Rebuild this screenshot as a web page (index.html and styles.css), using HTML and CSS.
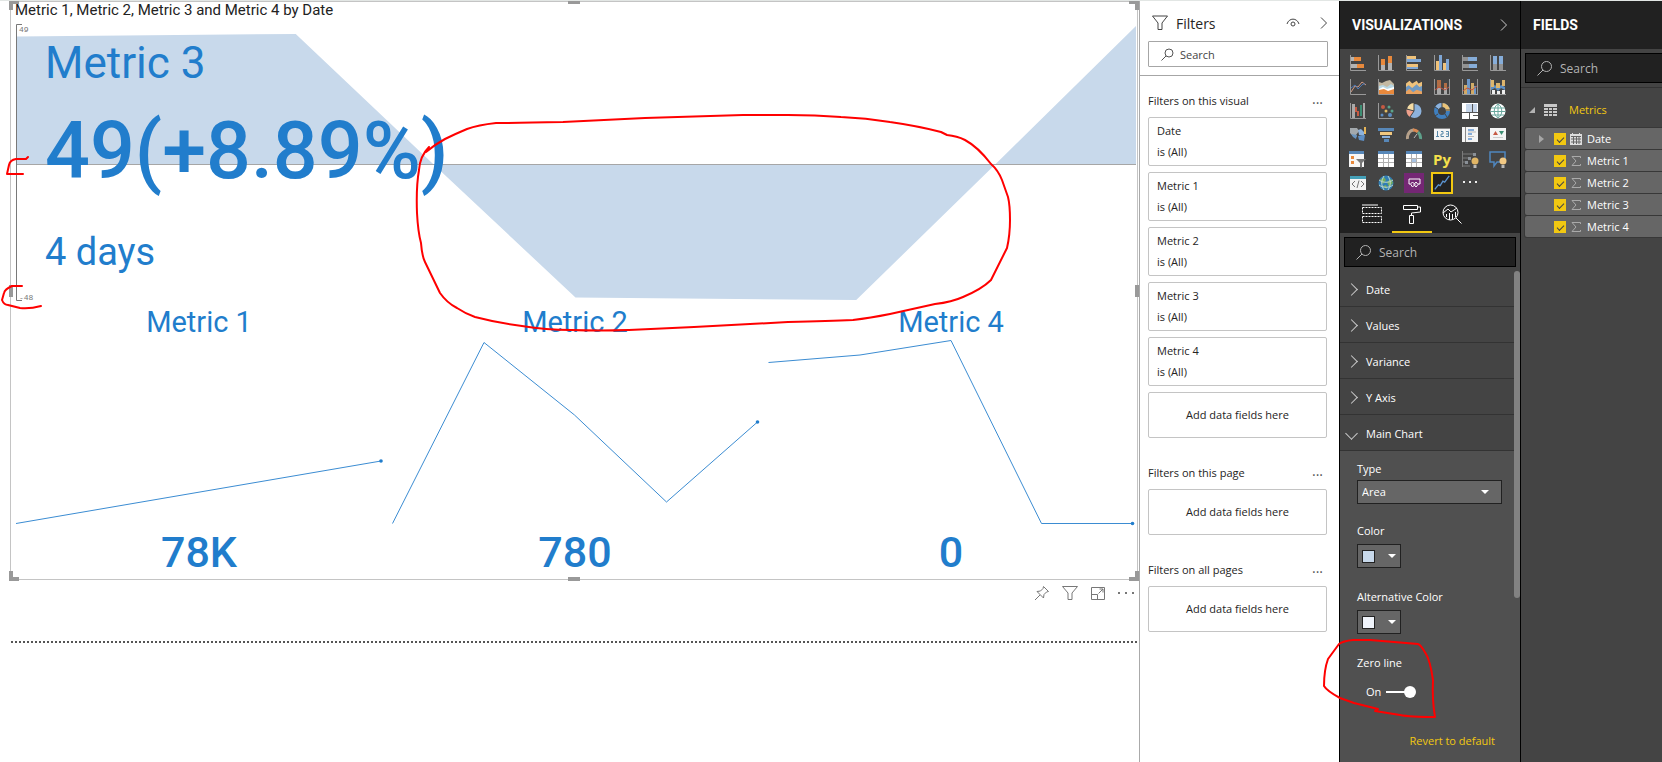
FILE: index.html
```html
<!DOCTYPE html>
<html lang="en">
<head>
<meta charset="utf-8">
<title>Metrics report</title>
<link rel="stylesheet" href="styles.css">
</head>
<body>
<div class="app">
  <main class="canvas">
    <section class="visual">
      <i class="handle tl"></i><i class="handle tr"></i><i class="handle bl"></i><i class="handle br"></i>
      <i class="handle top"></i><i class="handle bottom"></i><i class="handle left"></i><i class="handle right"></i>
      <h1 class="visual-title">Metric 1, Metric 2, Metric 3 and Metric 4 by Date</h1>
      <div class="main-chart">
        <svg class="area" viewBox="0 0 1121 280" preserveAspectRatio="none">
          <path d="M1 14.5 280 12 418 142.500H1ZM418 142.500H980L841 278 560 275.500ZM980 142.500 1121 4V142.500Z" fill="#c8d9eb"/>
          <path d="M0 142.500H1121" stroke="#a6a6a6"/>
          <path d="M6 2.500H.5V278.500H6" fill="none" stroke="#777"/>
        </svg>
        <div class="axis"><span>49</span><span>-48</span></div>
        <div class="kpi">
          <div class="kpi-name">Metric 3</div>
          <div class="kpi-value">49(+8.89%)</div>
          <div class="kpi-period">4 days</div>
        </div>
      </div>
      <div class="sparks">
        <div class="spark">
          <div class="spark-name">Metric 1</div>
          <svg viewBox="0 0 366 191" preserveAspectRatio="none"><path d="M0 187.500 365 125"/><circle cx="365" cy="125" r="1.800"/></svg>
          <div class="spark-value">78K</div>
        </div>
        <div class="spark">
          <div class="spark-name">Metric 2</div>
          <svg viewBox="0 0 366 191" preserveAspectRatio="none"><path d="M.5 187.500 92 6.500 182.500 79 274.500 166 365.500 86"/><circle cx="365.500" cy="86" r="1.800"/></svg>
          <div class="spark-value">780</div>
        </div>
        <div class="spark">
          <div class="spark-name">Metric 4</div>
          <svg viewBox="0 0 366 191" preserveAspectRatio="none"><path d="M.5 26.500 92 19 183 4.500 273.500 187.500H364.500"/><circle cx="364.500" cy="187.500" r="1.800"/></svg>
          <div class="spark-value">0</div>
        </div>
      </div>
    </section>
    <div class="visual-tools">
      <button aria-label="Pin visual"><svg viewBox="0 0 16 16"><path d="M9.500 1.500 14.500 6.500 12.500 7 10 9.500 9.500 13 3 6.500 6.500 6 9 3.500ZM6 10 1 15"/></svg></button>
      <button aria-label="Filters"><svg viewBox="0 0 16 16"><path d="M.5 1.500H15.500L10 8V14.500H6V8Z"/></svg></button>
      <button aria-label="Focus mode"><svg viewBox="0 0 16 16"><path d="M1.500 2.500H14.500V14.500H1.500ZM1.500 9.500H7.500V14.500M8.500 8.500 13 4M9.500 4H13V7.500"/></svg></button>
      <button aria-label="More options"><svg viewBox="0 0 16 16"><path class="dots" d="M0 7h2v2H0zM7 7h2v2H7zM14 7h2v2h-2z"/></svg></button>
    </div>
    <div class="page-end"></div>
  </main>

  <aside class="filters">
    <header class="filters-head">
      <div class="filters-title">
        <svg class="funnel" viewBox="0 0 16 16"><path d="M.5 1H15.500L10 8V14.500H6V8Z"/></svg>
        <h2>Filters</h2>
        <button aria-label="Show or hide filters"><svg width="14" height="12" viewBox="0 0 14 12"><path d="M1 7C3 .5 11 .5 13 7" /><circle cx="7" cy="7" r="2"/></svg></button>
        <button aria-label="Collapse filters"><svg width="8" height="12" viewBox="0 0 8 12"><path d="M1 .5 6.500 6 1 11.500"/></svg></button>
      </div>
      <label class="filter-search">
        <svg width="13" height="13" viewBox="0 0 13 13"><circle cx="8" cy="5" r="4"/><path d="M5 8 .5 12.500"/></svg>
        <input type="text" placeholder="Search" aria-label="Search filters">
      </label>
    </header>
    <div class="filters-body">
      <section>
        <div class="section-head"><h3>Filters on this visual</h3><button aria-label="More">...</button></div>
        <div class="cards">
          <div class="card"><b>Date</b><span>is (All)</span></div>
          <div class="card"><b>Metric 1</b><span>is (All)</span></div>
          <div class="card"><b>Metric 2</b><span>is (All)</span></div>
          <div class="card"><b>Metric 3</b><span>is (All)</span></div>
          <div class="card"><b>Metric 4</b><span>is (All)</span></div>
          <div class="drop">Add data fields here</div>
        </div>
      </section>
      <section>
        <div class="section-head"><h3>Filters on this page</h3><button aria-label="More">...</button></div>
        <div class="drop">Add data fields here</div>
      </section>
      <section>
        <div class="section-head"><h3>Filters on all pages</h3><button aria-label="More">...</button></div>
        <div class="drop">Add data fields here</div>
      </section>
    </div>
  </aside>

  <aside class="viz">
    <header class="dark-head"><h2>VISUALIZATIONS</h2><button aria-label="Collapse"><svg width="8" height="12" viewBox="0 0 8 12"><path d="M1 .5 6.500 6 1 11.500"/></svg></button></header>
    <div class="gallery">
      <button aria-label="Stacked bar"><svg viewBox="0 0 16 16"><path d="M1 2h3v4H1zM1 9h6v4H1z" fill="#b3b3b3"/><path d="M4 2h7v4H4zM7 9h7v4H7z" fill="#e8893c"/><path class="ax" d="M.5 0V15.500H16"/></svg></button>
      <button aria-label="Stacked column"><svg viewBox="0 0 16 16"><path d="M3 10h4v5H3zM10 8h4v7h-4z" fill="#b3b3b3"/><path d="M3 4h4v6H3zM10 1h4v7h-4z" fill="#e8893c"/><path class="ax" d="M.5 0V15.500H16"/></svg></button>
      <button aria-label="Clustered bar"><svg viewBox="0 0 16 16"><path d="M1 1h9v3H1zM1 9h11v3H1z" fill="#efc27b"/><path d="M1 4h14v3H1zM1 12h11v2H1z" fill="#7fa7d6"/><path class="ax" d="M.5 0V15.500H16"/></svg></button>
      <button aria-label="Clustered column"><svg viewBox="0 0 16 16"><path d="M2 6h3v9H2zM9 8h3v7H9z" fill="#efc27b"/><path d="M5 0h3v15H5zM12 4h3v11h-3z" fill="#7fa7d6"/><path class="ax" d="M.5 0V15.500H16"/></svg></button>
      <button aria-label="100% stacked bar"><svg viewBox="0 0 16 16"><path d="M1 2h5v4H1zM1 9h6v4H1z" fill="#929292"/><path d="M6 2h9v4H6zM7 9h8v4H7z" fill="#86add9"/><path class="ax" d="M.5 0V15.500H16"/></svg></button>
      <button aria-label="100% stacked column"><svg viewBox="0 0 16 16"><path d="M3 9h4v6H3zM9 9h4v6H9z" fill="#929292"/><path d="M3 1h4v8H3zM9 1h4v8H9z" fill="#86add9"/><path class="ax" d="M.5 0V15.500H16"/></svg></button>

      <button aria-label="Line"><svg viewBox="0 0 16 16" fill="none"><path d="M1 13 5 7 8 8 12 3 16 6" stroke="#d19a83"/><path d="M1 9 5 6 8 10 13 5 15 5" stroke="#4b78b5"/><path class="ax" d="M.5 0V15.500H16"/></svg></button>
      <button aria-label="Area"><svg viewBox="0 0 16 16"><path d="M1 3 4 4 8 2 12 1 16 5V15H1Z" fill="#c4b9a2"/><path d="M1 7 5 6 9 8 13 5 16 7V15H1Z" fill="#b8d7e3"/><path d="M1 10 5 8 9 10 16 8V15H1Z" fill="#fff"/><path d="M1 11 6 10 10 12 16 10V15H1Z" fill="#e8893c"/><path class="ax" d="M.5 0V15.500H16"/></svg></button>
      <button aria-label="Stacked area"><svg viewBox="0 0 18 16"><path d="M0 4 4 1 7 4 12 1 14 4 18 2V16H0Z" fill="#efc27b"/><path d="M0 8 3 6 7 9 12 5 15 8 18 7V16H0Z" fill="#6f9ac4"/><path d="M0 13 4 10 8 14 12 11 18 13V16H0Z" fill="#e8a25f"/></svg></button>
      <button aria-label="Line and stacked column"><svg viewBox="0 0 16 16" fill="none"><path d="M3 1h4v8H3zM10 4h3v5h-3z" fill="#b26d44"/><path d="M3 9h4v6H3zM10 9h3v6h-3z" fill="#a9a9a9"/><path d="M1 11 5 8 11 11 15 8" stroke="#c2533f"/><path class="ax" d="M.5 0V15.500H16M15.500 0V15"/></svg></button>
      <button aria-label="Line and clustered column"><svg viewBox="0 0 16 16" fill="none"><path d="M2 6h3v9H2zM9 4h3v11H9z" fill="#d2ab67"/><path d="M5 0h3v15H5zM12 7h2v8h-2z" fill="#6d98c9"/><path d="M1 12 5 9 10 11 15 7" stroke="#c2533f"/><path class="ax" d="M.5 0V15.500H16M15.500 0V15"/></svg></button>
      <button aria-label="Ribbon"><svg viewBox="0 0 16 16"><path d="M1 8 5 6 8 9 11 6 15 8V11L11 9 8 12 5 9 1 11Z" fill="#5e8fc4"/><path d="M1 1h3v7H1zM6 4h4v5H6zM12 1h3v6h-3z" fill="#ddb56d"/><path d="M2 11h3v4H2zM7 12h3v3H7zM12 11h3v4h-3z" fill="#eee"/><path class="ax" d="M.5 0V15.500H16"/></svg></button>

      <button aria-label="Waterfall"><svg viewBox="0 0 16 16"><path d="M2 1h3v14H2zM13 0h2v15h-2z" fill="#a9a9a9"/><path d="M5 4h2v5H5zM7 8h2v5H7z" fill="#c65a43"/><path d="M10 2h2v11h-2z" fill="#3e8f74"/><path class="ax" d="M.5 0V15.500H16"/></svg></button>
      <button aria-label="Scatter"><svg viewBox="0 0 16 16"><circle cx="5" cy="4" r="2" fill="#c65a43"/><circle cx="11" cy="4" r="1.500" fill="#5aa38b"/><circle cx="8" cy="8" r="1.500" fill="#e4bc64"/><circle cx="14" cy="8" r="1.500" fill="#5aa38b"/><circle cx="4" cy="12" r="1.500" fill="#5d8ec4"/><circle cx="12" cy="12" r="2" fill="#5d8ec4"/><path class="ax" d="M.5 0V15.500H16"/></svg></button>
      <button aria-label="Pie"><svg viewBox="0 0 16 16"><circle cx="8.500" cy="8" r="7" fill="#8db2dc"/><path d="M8 8V0A8 8 0 0 0 1 6Z" fill="#f4dca5"/><path d="M8 8 .5 6.500A8 8 0 0 0 4 14Z" fill="#efa08c"/><path d="M8 0V8L4 14M8 8 1 6" stroke="#444" fill="none"/></svg></button>
      <button aria-label="Donut"><svg viewBox="0 0 16 16" fill="none" stroke-width="4"><circle cx="8" cy="8" r="6" stroke="#3f7fbf"/><path d="M8 2A6 6 0 0 1 14 8" stroke="#e9c277"/><path d="M3 5A6 6 0 0 1 8 2" stroke="#8db2dc"/><path d="M8 0V4M16 7H12M1 4 4 6M1 13 4 11M13 14 11 11" stroke="#444" stroke-width="1"/></svg></button>
      <button aria-label="Treemap"><svg viewBox="0 0 16 16"><path d="M0 0h16v16H0z" fill="#fff"/><path d="M4 1h11v8H4z" fill="#c6d6ea"/><path d="M0 9.500H16M7.500 10V16M10.500 1V9M11 12.500H16" stroke="#555"/></svg></button>
      <button aria-label="Map"><svg viewBox="0 0 16 16"><circle cx="8" cy="8" r="7.500" fill="#fff"/><path d="M1 5H15M.5 8.500H15.500M2 12H14M8 1V15M8 1C3 4 3 12 8 15M8 1C13 4 13 12 8 15" fill="none" stroke="#68a79d"/></svg></button>

      <button aria-label="Filled map"><svg viewBox="0 0 16 16"><path d="M0 1H7L9 4 6 8 7 10 3 9 0 6Z" fill="#a3a9ad"/><path d="M8 3 11 2 14 5V9L9 8Z" fill="#8db2dc"/><path d="M1 7 7 8 6 12 3 10Z" fill="#6793bf"/><path d="M8 9 15 8 14 14 9 13Z" fill="#5d8ec4"/><path d="M14 0h2v7h-2z" fill="#e4b458"/></svg></button>
      <button aria-label="Funnel"><svg viewBox="0 0 16 16"><path d="M0 1h16v3H0z" fill="#5787b8"/><path d="M2 5h12v3H2z" fill="#f0c77f"/><path d="M4 9h8v2H4z" fill="#8db2dc"/><path d="M6 12h5v3H6z" fill="#5787b8"/></svg></button>
      <button aria-label="Gauge"><svg viewBox="0 0 16 16" fill="none" stroke-width="3"><path d="M1.500 12A6.500 8 0 0 1 8 3" stroke="#b5a08a"/><path d="M7 3A6 7 0 0 1 12 5" stroke="#d98a53"/><path d="M12 5A7 8 0 0 1 14.500 12" stroke="#5ea08a"/><path d="M8 11 11 7" stroke="#bbb" stroke-width="1"/></svg></button>
      <button aria-label="Card"><svg viewBox="0 0 16 16"><path d="M0 1h16v12H0z" fill="#f4f4f4"/><path d="M0 1.500h16" stroke="#888"/><path d="M3.500 4V9M2 9.500H5M7 4.500H9V7H7V9.500H10M12 4.500H14.500V9.500H12M12 7H14" fill="none" stroke="#5787a8"/></svg></button>
      <button aria-label="Multi-row card"><svg viewBox="0 0 16 16"><path d="M0 0h16v15H0z" fill="#f4f4f4"/><path d="M3.500 0V15" stroke="#888"/><path d="M6 2h6v2H6zM6 6h4v2H6zM6 11h4v2H6z" fill="#86add9"/><path d="M6 5h8M6 9.500h6" stroke="#bbb"/></svg></button>
      <button aria-label="KPI"><svg viewBox="0 0 16 16"><path d="M0 1h16v12H0z" fill="#f4f4f4"/><path d="M3 8 5.500 4 8 8Z" fill="#c65a43"/><path d="M9 4H14L11.500 8Z" fill="#3e8f74"/><path d="M3 10.500H13" stroke="#ccc"/></svg></button>

      <button aria-label="Slicer"><svg class="wide" viewBox="0 0 18 17"><path d="M0 0h15v16H0z" fill="#f6f6f6"/><path d="M0 0h15v3H0z" fill="#5787b8"/><path d="M2 5h3v3H2zM2 10h3v3H2z" fill="#e8893c"/><path d="M7 8h10l-4 4v5l-2-1v-4z" fill="#777"/></svg></button>
      <button aria-label="Table"><svg viewBox="0 0 16 16"><path d="M0 0h16v16H0z" fill="#fff"/><path d="M0 0h16v3H0z" fill="#5787b8"/><path d="M0 7.500H16M0 11.500H16M5.500 3V16M10.500 3V16" stroke="#b0b0b0"/></svg></button>
      <button aria-label="Matrix"><svg viewBox="0 0 16 16"><path d="M0 0h16v16H0z" fill="#fff"/><path d="M0 0h16v3H0z" fill="#5787b8"/><path d="M5 8h6v4H5z" fill="#a8c4e4"/><path d="M0 7.500H16M0 11.500H16M5.500 3V16M10.500 3V16" stroke="#b0b0b0"/></svg></button>
      <button class="py" aria-label="Python visual">Py</button>
      <button aria-label="Key influencers"><svg class="wide" viewBox="0 0 18 17"><path d="M1.500 0V16M2 3H13M2 7H8M2 11H5M2 15H9" stroke="#7b7b7b" fill="none"/><path d="M12 2h3v3h-3zM7 6h3v3H7zM4 10h3v3H4z" fill="#8a9097"/><circle cx="14" cy="10" r="3.500" fill="#e0b565"/><path d="M12.500 14h3v3h-3z" fill="#b9b9b9"/></svg></button>
      <button aria-label="Q&amp;A"><svg class="wide" viewBox="0 0 18 17"><path d="M1 1H16V11H8L5 15V11H1Z" fill="none" stroke="#4f86bf" stroke-width="1.500"/><circle cx="14" cy="10" r="3.500" fill="#f2c984"/><path d="M12.500 14h3v3h-3z" fill="#b9b9b9"/></svg></button>

      <button aria-label="Script visual"><svg viewBox="0 0 16 16"><path d="M0 1h16v14H0z" fill="#f4f4f4"/><path d="M0 1h16v3H0z" fill="#44a0b8"/><path d="M5 6 2 9 5 12M11 6 14 9 11 12M9 5.500 7 13" fill="none" stroke="#777"/></svg></button>
      <button aria-label="ArcGIS map"><svg viewBox="0 0 16 16"><circle cx="8" cy="8" r="7.500" fill="#2f7db5"/><path d="M2 5 6 2 8 5 5 9ZM9 7 13 4 15 8 11 12ZM5 11 8 10 9 14Z" fill="#74ad5d"/><path d="M1 5C5 8 11 8 15 5M1 10C5 13 11 13 15 10M6 1C3 6 3 10 6 15M10 1C13 6 13 10 10 15" stroke="#bcd6cc" fill="none"/></svg></button>
      <button aria-label="Power Apps"><svg class="big" viewBox="0 0 20 20"><path d="M0 0h20v20H0z" fill="#742774"/><path d="M6 11H5V6H16V11H14M6.500 11 8.500 9 11 11.500 8.500 14ZM10 11.500 12 9 14 11.500 12 14Z" fill="none" stroke="#fff"/></svg></button>
      <button class="chosen" aria-label="Power KPI"><svg class="big" viewBox="0 0 20 20"><path d="M2 17 6 12 8 13 11 8 13 9 18 2" fill="none" stroke="#5b93cf" stroke-width="1.500"/></svg></button>
      <button aria-label="More visuals"><svg viewBox="0 0 16 16"><path d="M1 6h2v2H1zM7 6h2v2H7zM13 6h2v2h-2z" fill="#eee"/></svg></button>
    </div>
    <nav class="tabs">
      <button aria-label="Fields"><svg viewBox="0 0 20 20"><path d="M0 1H16"/><path d="M.5 3.500H19.500V9.500H.5ZM.5 12.500H19.500V18.500H.5Z" stroke-dasharray="2 1"/></svg></button>
      <button class="on" aria-label="Format"><svg viewBox="0 0 20 20"><path d="M1.500 1.500H15.500V5.500H1.500ZM15.500 3H18.500V8L9.500 9V11.500M7.500 11.500H11.500V19.500H7.500Z"/></svg></button>
      <button aria-label="Analytics"><svg viewBox="0 0 20 20"><circle cx="8.500" cy="8.500" r="7.500"/><path d="M1 9 6 5 9 8 15 4M4.500 10V13M7.500 9V16M10.500 10V15M13.500 8V13M14 14 19.500 19.500"/></svg></button>
    </nav>
    <label class="dark-search">
      <svg width="15" height="15" viewBox="0 0 15 15"><circle cx="9.500" cy="5.500" r="5"/><path d="M6 9 .5 14.500"/></svg>
      <input type="text" placeholder="Search" aria-label="Search format options">
    </label>
    <div class="options">
      <button class="opt">Date</button>
      <button class="opt">Values</button>
      <button class="opt">Variance</button>
      <button class="opt">Y Axis</button>
      <button class="opt open">Main Chart</button>
      <div class="fields-form">
        <div class="control control-select">
          <label for="type">Type</label>
          <div class="pick"><select id="type"><option>Area</option><option>Line</option></select></div>
        </div>
        <div class="control">
          <label for="color">Color</label>
          <button id="color" class="swatch"><i class="blue"></i></button>
        </div>
        <div class="control">
          <label for="alt">Alternative Color</label>
          <button id="alt" class="swatch"><i></i></button>
        </div>
        <div class="control">
          <span>Zero line</span>
          <label class="toggle">On <input type="checkbox" checked></label>
        </div>
        <a class="revert" href="#">Revert to default</a>
      </div>
      <i class="scroll"></i>
    </div>
  </aside>

  <aside class="fields">
    <header class="dark-head"><h2>FIELDS</h2></header>
    <div class="fields-search">
      <label class="dark-search">
        <svg width="15" height="15" viewBox="0 0 15 15"><circle cx="9.500" cy="5.500" r="5"/><path d="M6 9 .5 14.500"/></svg>
        <input type="text" placeholder="Search" aria-label="Search fields">
      </label>
    </div>
    <button class="table-row">
      <svg width="6" height="6" viewBox="0 0 6 6"><path d="M6 0V6H0Z" fill="#b3b3b3"/></svg>
      <svg width="13" height="12" viewBox="0 0 13 12"><path d="M0 0h13v12H0z" fill="#c8c8c8"/><path d="M0 3.500H13M0 6.500H13M0 9.500H13M4.500 3V12M8.500 3V12" stroke="#444"/></svg>
      <span>Metrics</span>
    </button>
    <div class="field-list">
      <label class="field"><svg width="5" height="8" viewBox="0 0 5 8"><path d="M0 0 5 4 0 8Z" fill="#a6a6a6"/></svg><input type="checkbox" checked><svg width="12" height="12" viewBox="0 0 12 12"><path d="M0 1h12v11H0z" fill="#ddd"/><path d="M2.500 0V2M9.500 0V2" stroke="#ddd"/><path d="M1 3.500H11M1 6H11M1 9H11M3.500 4V11M6.500 4V11M9 4V11" stroke="#666"/></svg><span>Date</span></label>
      <label class="field"><i></i><input type="checkbox" checked><svg width="12" height="12" viewBox="0 0 12 12"><path d="M10.500 3V1.500H2L6 6 2 10.500H10.500V9" fill="none" stroke="#aaa"/></svg><span>Metric 1</span></label>
      <label class="field"><i></i><input type="checkbox" checked><svg width="12" height="12" viewBox="0 0 12 12"><path d="M10.500 3V1.500H2L6 6 2 10.500H10.500V9" fill="none" stroke="#aaa"/></svg><span>Metric 2</span></label>
      <label class="field"><i></i><input type="checkbox" checked><svg width="12" height="12" viewBox="0 0 12 12"><path d="M10.500 3V1.500H2L6 6 2 10.500H10.500V9" fill="none" stroke="#aaa"/></svg><span>Metric 3</span></label>
      <label class="field"><i></i><input type="checkbox" checked><svg width="12" height="12" viewBox="0 0 12 12"><path d="M10.500 3V1.500H2L6 6 2 10.500H10.500V9" fill="none" stroke="#aaa"/></svg><span>Metric 4</span></label>
    </div>
  </aside>

  <svg class="ink" viewBox="0 0 1662 762" preserveAspectRatio="none">
    <path d="M429 147Q420 156 419 170Q416 187 417 213Q418 232 421 243Q422 256 425 262L440 293Q447 303 457 308Q466 314 475 317Q498 323 522 326Q546 330 571 330Q600 331 629 330L694 327 788 322Q830 321 853 320Q870 318 890 314L935 304Q952 302 963 297Q982 289 991 280L1007 248Q1010 235 1010 220Q1010 205 1008 197L1002 180Q998 170 991 164Q978 147 965 140Q957 136 947 135L941 132Q918 126 890 122Q866 118 841 117Q815 115 788 115H743L645 118 563 122Q520 123 496 123Q478 125 467 129Q455 134 445 139Q434 145 426 152"/>
    <path d="M28 157 26 159H16Q10 160 9 165L7 174H23"/>
    <path d="M22 286H12Q5 289 4 293L2 300Q4 305 8 305L20 308Q30 309 41 306"/>
    <path d="M1418 644Q1395 642 1370 640H1353Q1343 641 1339 644L1328 659Q1324 670 1324 686 1327 691 1340 698L1354 703 1378 709 1375 711 1400 715Q1410 717 1435 717Q1432 700 1433 680 1430 660 1426 654 1421 645 1418 644"/>
  </svg>
</div>
</body>
</html>
```

FILE: styles.css
```css
* { box-sizing: border-box; }
body {
  margin: 0;
  font-family: "Open Sans", "Noto Sans", sans-serif;
  font-size: 11px;
  line-height: 16px;
  color: #252423;
  background: #fff;
}
h1, h2, h3 { margin: 0; font-weight: 400; font-size: inherit; }
button {
  margin: 0;
  padding: 0;
  border: 0;
  background: none;
  color: inherit;
  font: inherit;
  cursor: pointer;
}
button svg { display: block; }
input, select { font: inherit; color: inherit; }

.app {
  position: relative;
  display: grid;
  grid-template-columns: minmax(0, 1fr) 200px 181px 142px;
  min-height: 100vh;
  border-top: 1px solid #e2e6e4;
  overflow: hidden;
}

/* report canvas */
.canvas { padding: 0 1px 0 10px; }
.visual {
  position: relative;
  border: 1px solid #c4c4c4;
  font-family: Roboto, sans-serif;
  color: #217dcc;
  padding-bottom: 2px;
}
.visual-title {
  padding-left: 4px;
  font-size: 15px;
  line-height: 20px;
  height: 20px;
  margin-top: -2px;
  margin-bottom: 2px;
  color: #222;
}
.handle { position: absolute; border: 0 solid #999; width: 10px; height: 10px; }
.tl { left: -2px; top: -2px; border-width: 4px 0 0 4px; }
.tr { right: -2px; top: -2px; border-width: 4px 4px 0 0; }
.bl { left: -2px; bottom: -2px; border-width: 0 0 4px 4px; }
.br { right: -2px; bottom: -2px; border-width: 0 4px 4px 0; }
.top, .bottom { left: calc(50% - 6px); width: 12px; height: 4px; background: #999; }
.top { top: -2px; }
.bottom { bottom: -2px; }
.left, .right { top: calc(50% - 6px); width: 4px; height: 12px; background: #999; }
.left { left: -2px; }
.right { right: -2px; }

.main-chart { display: grid; margin: 0 1px 0 5px; height: 280px; }
.main-chart > * { grid-area: 1 / 1; }
.area { width: 100%; height: 280px; }
.axis {
  display: flex;
  flex-direction: column;
  justify-content: space-between;
  padding: 4px 0 0 3px;
  font-family: "Liberation Mono", monospace;
  font-size: 8px;
  line-height: 8px;
  color: #777;
}
.kpi { padding: 17px 0 0 29px; }
.kpi-name { font-size: 44px; line-height: 48px; }
.kpi-value { font-size: 79px; line-height: 88px; font-weight: 500; margin-top: 20px; }
.kpi-period { font-size: 38px; line-height: 44px; margin-top: 35px; }
.sparks {
  display: grid;
  grid-template-columns: repeat(3, minmax(0, 1fr));
  gap: 10px;
  padding: 5px 3px 0 5px;
  text-align: center;
}
.spark-name { font-size: 29px; line-height: 30px; }
.spark svg { display: block; width: 100%; height: 191px; margin-top: -1px; overflow: visible; }
.spark path { fill: none; stroke: #3b8cd2; }
.spark circle { fill: #217dcc; }
.spark-value { font-size: 43px; line-height: 50px; font-weight: 500; }

.visual-tools { display: flex; justify-content: flex-end; gap: 12px; padding: 5px 4px 0 0; }
.visual-tools svg { width: 16px; height: 16px; fill: none; stroke: #777; }
.visual-tools .dots { fill: #777; stroke: none; }
.page-end {
  height: 2px;
  margin: 40px 1px 0 1px;
  background: repeating-linear-gradient(90deg, #555 0 2px, transparent 2px 4px);
}

/* filters pane */
.filters { border-left: 1px solid #aaa; background: #fff; }
.filters-head { padding: 10px 11px 8px 8px; border-bottom: 1px solid #a6a6a6; }
.filters-title { display: flex; align-items: center; gap: 8px; height: 24px; padding: 0 0 0 4px; margin-bottom: 6px; }
.filters-title h2 { font-size: 14px; flex: 1; padding-top: 1px; }
.filters-title svg { fill: none; stroke: #444; display: block; }
.filters-title button + button { margin-left: 12px; }
.funnel { width: 16px; height: 16px; }
.filter-search {
  display: flex;
  align-items: center;
  gap: 6px;
  height: 26px;
  padding-left: 12px;
  border: 1px solid #a6a6a6;
  border-radius: 1px;
}
.filter-search svg { fill: none; stroke: #555; flex: none; }
.filter-search input { border: 0; outline: 0; padding: 2px 0 0; width: 100%; background: none; }
.filter-search input::placeholder { color: #444; opacity: 1; }
.filters-body { display: grid; gap: 27px; padding: 17px 12px 0 8px; }
.section-head { display: flex; justify-content: space-between; margin-bottom: 8px; padding-right: 4px; height: 16px; }
.section-head button { font-size: 14px; line-height: 12px; height: 16px; padding-bottom: 4px; color: #555; }
.cards { display: grid; gap: 6px; }
.card {
  display: flex;
  flex-direction: column;
  gap: 5px;
  height: 49px;
  padding: 5px 8px;
  border: 1px solid #c4c4c4;
  border-radius: 2px;
}
.card b { font-weight: 400; }
.drop {
  height: 46px;
  border: 1px solid #c4c4c4;
  border-radius: 2px;
  line-height: 44px;
  text-align: center;
}

/* dark panes */
.viz, .fields { background: #444; color: #fff; border-left: 1px solid #000; min-width: 0; }
.viz { display: flex; flex-direction: column; }
.dark-head {
  display: flex;
  align-items: center;
  justify-content: space-between;
  height: 48px;
  padding: 0 12px;
  background: #212121;
}
.dark-head h2 { font: 700 14px/20px Roboto, sans-serif; }
.dark-head svg { fill: none; stroke: #ccc; }
.gallery {
  display: grid;
  grid-template-columns: repeat(6, 28px);
  grid-auto-rows: 24px;
  padding: 2px 4px;
}
.gallery button { display: grid; place-items: center; }
.gallery svg { width: 16px; height: 16px; }
.gallery .wide { width: 18px; height: 17px; }
.gallery .big { width: 20px; height: 20px; }
.gallery .ax { fill: none; stroke: #999; }
.gallery .chosen { justify-self: center; align-self: center; width: 22px; height: 22px; border: 2px solid #f2c811; background: #222; }
.gallery .chosen .big { width: 18px; height: 18px; }
.gallery .py { font: 700 15px/20px "Open Sans", sans-serif; color: #f6e04c; }
.tabs { display: flex; height: 36px; padding-left: 12px; background: #212121; }
.tabs button { display: grid; place-items: center; width: 40px; border-bottom: 2px solid transparent; }
.tabs .on { border-color: #f2c811; }
.tabs svg { width: 20px; height: 20px; fill: none; stroke: #fff; }
.dark-search {
  display: flex;
  align-items: center;
  gap: 8px;
  height: 30px;
  margin: 4px;
  padding-left: 11px;
  background: #212121;
  border: 1px solid #000;
  font-size: 12px;
  color: #b3b3b3;
}
.dark-search svg { fill: none; stroke: #b3b3b3; flex: none; }
.dark-search input { border: 0; outline: 0; padding: 2px 0 0; width: 100%; background: none; }
.dark-search input::placeholder { color: #b3b3b3; opacity: 1; }

.options { position: relative; flex: 1; display: flex; flex-direction: column; }
.scroll { position: absolute; right: 0; top: 0; width: 6px; height: 327px; border-radius: 3px; background: #828282; }
.opt {
  display: flex;
  align-items: center;
  gap: 10px;
  height: 36px;
  padding: 2px 0 0 7px;
  border-bottom: 1px solid #333;
  text-align: left;
  font-weight: 500;
}
.opt::before {
  content: "";
  width: 8px;
  height: 8px;
  border: solid #ccc;
  border-width: 1px 1px 0 0;
  transform: rotate(45deg);
}
.opt.open::before { transform: rotate(135deg); }
.fields-form { flex: 1; display: flex; flex-direction: column; gap: 18px; padding: 10px 17px; background: #505050; }
.control { display: flex; flex-direction: column; align-items: flex-start; gap: 5px; min-height: 48px; }
.control-select { gap: 3px; min-height: 44px; }
.pick, .swatch { position: relative; height: 24px; background: #666; border: 1px solid #212121; }
.pick { width: 100%; max-width: 145px; }
.pick select { appearance: none; width: 100%; height: 22px; padding: 0 4px; border: 0; background: none; }
.pick::after, .swatch::after {
  content: "";
  position: absolute;
  right: 12px;
  top: 9px;
  border: 4px solid transparent;
  border-top-color: #fff;
  border-bottom: 0;
}
.swatch { width: 44px; }
.swatch::after { right: 4px; }
.swatch i { display: block; width: 13px; height: 13px; margin-left: 4px; border: 1px solid #212121; background: #eff3fa; }
.swatch .blue { background: #c8d9eb; }
.toggle { display: flex; align-items: center; gap: 5px; padding: 8px 0 0 9px; }
.toggle input { appearance: none; position: relative; width: 30px; height: 12px; margin: 0; background: linear-gradient(#fff, #fff) 0 5px / 20px 2px no-repeat; }
.toggle input::after { content: ""; position: absolute; right: 0; top: 0; width: 12px; height: 12px; border-radius: 50%; background: #fff; }
.revert { align-self: flex-end; margin: 12px 8px 0 0; color: #f2c811; text-decoration: none; }

/* fields pane */
.fields-search { border-bottom: 1px solid #333; }
.fields-search .dark-search { margin-right: 0; border-right: 0; }
.table-row { display: flex; align-items: center; height: 40px; margin-top: 2px; padding-left: 8px; color: #f2c811; }
.table-row svg + svg { margin: 0 12px 0 9px; }
.field-list { display: grid; gap: 1px; padding-left: 4px; margin-top: -2px; }
.field {
  display: grid;
  grid-template-columns: 11px 12px 12px auto;
  justify-content: start;
  align-items: center;
  column-gap: 4px;
  height: 21px;
  padding-left: 14px;
  background: #666;
  border-radius: 2px 0 0 2px;
  box-shadow: 0 0 0 1px #383838;
  font-weight: 500;
}
.field input { appearance: none; position: relative; width: 12px; height: 12px; margin: 0; background: #f2c811; }
.field span { padding-left: 1px; }
.field input::after {
  content: "";
  position: absolute;
  left: 3px;
  top: 4px;
  width: 6px;
  height: 3px;
  border: solid #444;
  border-width: 0 0 1px 1px;
  transform: rotate(-45deg);
}

/* pen marks over the report */
.ink { position: absolute; left: 0; top: -1px; width: 100%; height: 762px; pointer-events: none; }
.ink path { fill: none; stroke: #f00; stroke-width: 2; stroke-linejoin: round; stroke-linecap: round; }
```
